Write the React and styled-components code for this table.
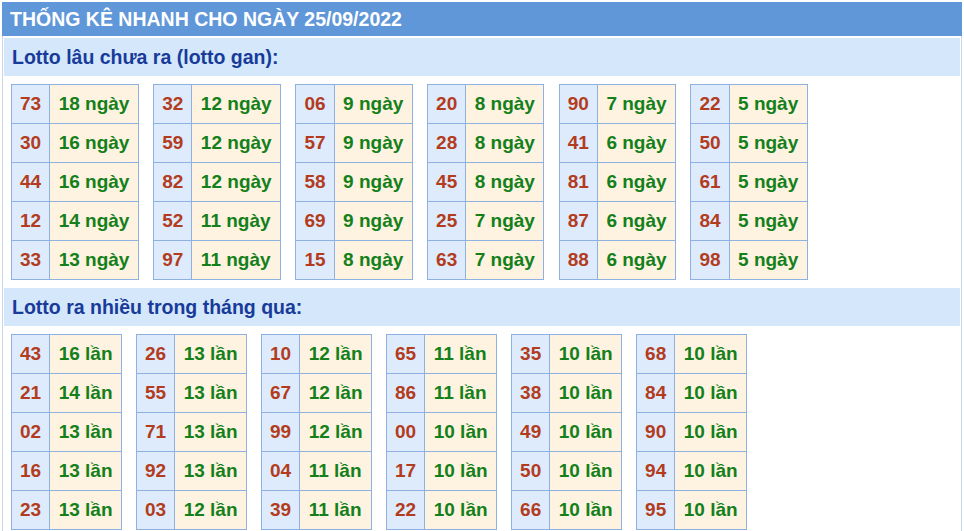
import styled, { createGlobalStyle } from "styled-components"

const Global = createGlobalStyle`
  body {
    margin: 0;
    background: #fff;
    font-family: "Liberation Sans", Arial, sans-serif;
  }
`

const Box = styled.div`
  width: 958px;
  margin: 2px 0 0 2px;
  border: 1px solid #c8d8e8;
  border-top: none;
  padding-bottom: 2px;
`

const Header = styled.div`
  height: 34px;
  margin: 0 -1px;
  background: #5f97d9;
  color: #fff;
  font-size: 19.5px;
  font-weight: bold;
  line-height: 35px;
  padding-left: 8px;
`

const SectionTitle = styled.div`
  height: 38px;
  margin: ${p => (p.first ? "2px" : "8px")} 1px 0;
  background: #d4e7fb;
  color: #183b9a;
  font-size: 19.5px;
  font-weight: bold;
  line-height: 38px;
  padding-left: 8px;
`

const Tables = styled.div`
  display: flex;
  gap: ${p => p.gap}px;
  padding: 8px 0 0 8px;
`

const Table = styled.table`
  border-collapse: collapse;
  font-size: 19px;
  font-weight: bold;
`

const Num = styled.td`
  height: 38px;
  padding: 0 8px;
  border: 1px solid #8fb1e1;
  background: #deebfc;
  color: #b23c1d;
  text-align: center;
`

const Val = styled.td`
  height: 38px;
  padding: 0 8.5px;
  border: 1px solid #8fb1e1;
  background: #fef2e1;
  color: #13801a;
  white-space: nowrap;
`

const gan = [
  [["73", 18], ["30", 16], ["44", 16], ["12", 14], ["33", 13]],
  [["32", 12], ["59", 12], ["82", 12], ["52", 11], ["97", 11]],
  [["06", 9], ["57", 9], ["58", 9], ["69", 9], ["15", 8]],
  [["20", 8], ["28", 8], ["45", 8], ["25", 7], ["63", 7]],
  [["90", 7], ["41", 6], ["81", 6], ["87", 6], ["88", 6]],
  [["22", 5], ["50", 5], ["61", 5], ["84", 5], ["98", 5]],
]

const nhieu = [
  [["43", 16], ["21", 14], ["02", 13], ["16", 13], ["23", 13]],
  [["26", 13], ["55", 13], ["71", 13], ["92", 13], ["03", 12]],
  [["10", 12], ["67", 12], ["99", 12], ["04", 11], ["39", 11]],
  [["65", 11], ["86", 11], ["00", 10], ["17", 10], ["22", 10]],
  [["35", 10], ["38", 10], ["49", 10], ["50", 10], ["66", 10]],
  [["68", 10], ["84", 10], ["90", 10], ["94", 10], ["95", 10]],
]

function Group({ data, unit, gap }) {
  return (
    <Tables gap={gap}>
      {data.map((col, i) => (
        <Table key={i}>
          <tbody>
            {col.map(([n, c]) => (
              <tr key={n}>
                <Num>{n}</Num>
                <Val>{c} {unit}</Val>
              </tr>
            ))}
          </tbody>
        </Table>
      ))}
    </Tables>
  )
}

export default function App() {
  return (
    <>
      <Global />
      <Box>
        <Header>THỐNG KÊ NHANH CHO NGÀY 25/09/2022</Header>
        <SectionTitle first>Lotto lâu chưa ra (lotto gan):</SectionTitle>
        <Group data={gan} unit="ngày" gap={14.3} />
        <SectionTitle>Lotto ra nhiều trong tháng qua:</SectionTitle>
        <Group data={nhieu} unit="lần" gap={14} />
      </Box>
    </>
  )
}
